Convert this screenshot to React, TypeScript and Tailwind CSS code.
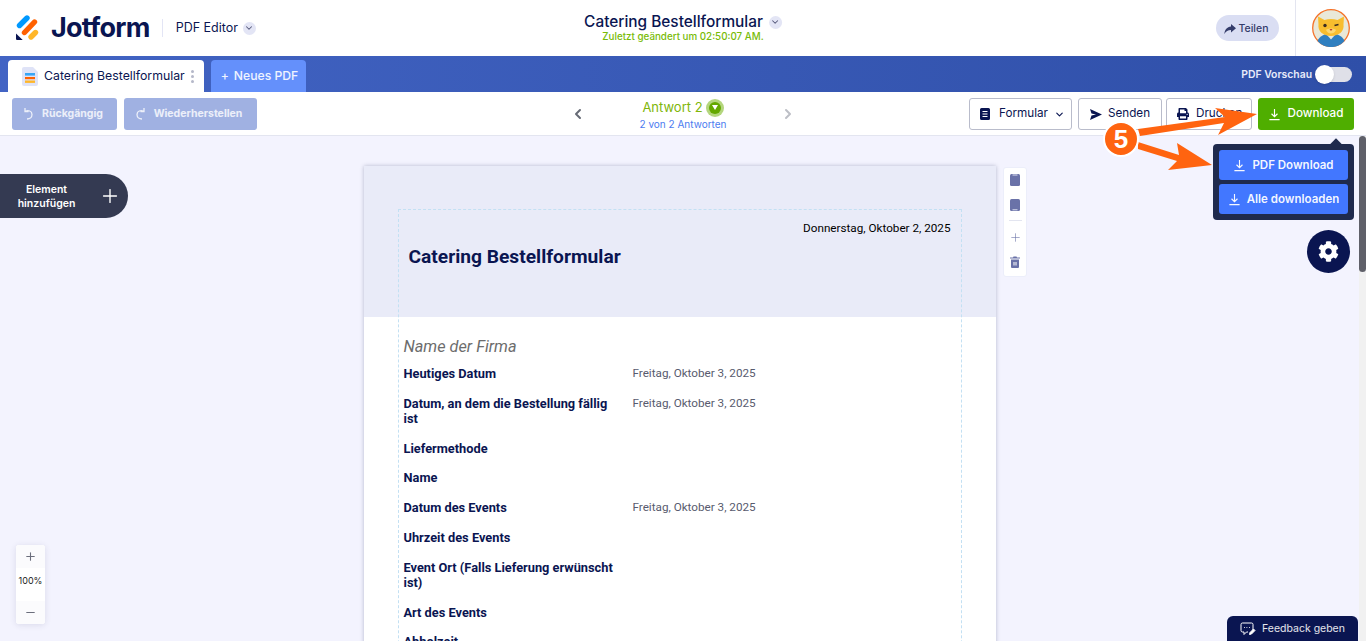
import { ChevronDown, ChevronLeft, ChevronRight, Minus, Plus } from "lucide-react";
import { FaCog, FaPrint } from "react-icons/fa";

const ui = "font-['Inter',sans-serif]";

function DownloadIcon({ className }: { className?: string }) {
  return (
    <svg className={className} viewBox="0 0 14 14" fill="none" stroke="currentColor" strokeWidth={1.2}>
      <path d="M7 1v8M3.800 6.200 7 9.400l3.200-3.200M1.500 12.500h11" />
    </svg>
  );
}

function Logo() {
  return (
    <svg width="24" height="26" viewBox="0 0 24 26" className="shrink-0">
      <path d="M3.500 10.500 11 3" stroke="#0099ff" strokeWidth="5.400" strokeLinecap="round" />
      <path d="M8.500 17.500 18.500 7" stroke="#ff6100" strokeWidth="5.400" strokeLinecap="round" />
      <path d="M15 22 19.500 17.500" stroke="#ffb629" strokeWidth="5.400" strokeLinecap="round" />
      <path d="M0 18.500v5.200c0 .8.600 1.300 1.300 1.300h5.400z" fill="#0a1551" />
    </svg>
  );
}

function Avatar() {
  return (
    <svg width="38" height="38" viewBox="0 0 38 38">
      <circle cx="19" cy="19" r="18.300" fill="#e9e8d8" stroke="#f5732a" strokeWidth="1.300" />
      <path d="M5.500 32c2-5 7-7.500 13.500-7.500S30.500 27 32.500 32a18 18 0 0 1-27 0z" fill="#2f7fc0" />
      <path d="M15 26l4 4.500 4-4.500z" fill="#e9e8d8" />
      <path d="M6 7.500l6.500 3.500c4-1.500 9-1.500 13 0L32 7.500l-.5 8c1 6.500-4.500 11.500-12.500 11.500S5.500 22 6.500 15.500z" fill="#f8bd2e" />
      <path d="M14 21c2-2 8-2 10 0-1 2.500-3 3.500-5 3.500S15 23.500 14 21z" fill="#fbd873" />
      <circle cx="13" cy="16.500" r="1.700" fill="#3a2b20" />
      <path d="M22.500 16.500l4-1" stroke="#3a2b20" strokeWidth="1.500" />
      <path d="M17.500 20h3l-1.500 2z" fill="#c0392b" />
    </svg>
  );
}

function Header() {
  return (
    <header className="relative h-14 shrink-0 bg-white flex items-center">
      <div className="flex items-center pl-4">
        <Logo />
        <span className="ml-[11px] -mt-[2px] text-[27px] font-bold leading-none tracking-[-0.75px] text-[#0a1551]">Jotform</span>
        <span className="ml-[12px] h-[18px] w-px bg-[#e3e5f5]" />
        <span className="ml-[13px] text-[12.500px] text-[#0a1551]">PDF Editor</span>
        <span className="ml-[5px] size-[13px] rounded-full bg-[#e3e5f5] flex items-center justify-center text-[#56597a]">
          <ChevronDown size={10} strokeWidth={2.500} />
        </span>
      </div>
      <div className="absolute left-1/2 top-[13px] -translate-x-1/2 flex flex-col items-center">
        <div className="flex items-center gap-[6px]">
          <span className="text-[15.400px] font-medium leading-[18px] text-[#0a1551]">Catering Bestellformular</span>
          <span className="size-[13px] rounded-full bg-[#e3e5f5] flex items-center justify-center text-[#56597a]">
            <ChevronDown size={10} strokeWidth={2.500} />
          </span>
        </div>
        <span className="text-[9.800px] leading-[11px] font-medium text-[#78bb07]">Zuletzt geändert um 02:50:07 AM.</span>
      </div>
      <div className="ml-auto flex items-center h-full">
        <button className="h-[26px] w-[63px] rounded-full bg-[#dadef3] flex items-center justify-center gap-[3px] pr-[3px] pt-px text-[10.500px] font-medium text-[#343c6a]">
          <svg width="12" height="10" viewBox="0 0 12 10" fill="#343c6a">
            <path d="M7 0l5 4.200L7 8.500V6C4 6 1.800 7.200.3 10 .8 5.800 3 2.800 7 2.500z" />
          </svg>
          Teilen
        </button>
        <div className="ml-4 h-full w-[71px] border-l border-[#e3e5f0] flex items-center justify-center pr-px">
          <Avatar />
        </div>
      </div>
    </header>
  );
}

function TabBar() {
  return (
    <div className="h-9 shrink-0 bg-gradient-to-r from-[#4264c4] to-[#2f4fa8] flex items-end pl-2 pr-[14px]">
      <div className="h-8 w-[196px] rounded-t bg-white flex items-center pl-[14px] relative">
        <svg width="16" height="19" viewBox="0 0 16 19" className="shrink-0">
          <path d="M2 0h9l5 5v12a2 2 0 0 1-2 2H2a2 2 0 0 1-2-2V2a2 2 0 0 1 2-2z" fill="#dfe3f7" />
          <rect x="3" y="6" width="10" height="2.600" fill="#39a6f5" />
          <rect x="3" y="10" width="10" height="2.200" fill="#ff6100" />
          <rect x="3" y="13.500" width="10" height="2.400" fill="#ffb629" />
        </svg>
        <span className="ml-[6px] text-[12.300px] text-[#0a1551] whitespace-nowrap">Catering Bestellformular</span>
        <span className="ml-[6px] flex flex-col gap-[2px]">
          <i className="size-[3px] rounded-full bg-[#b5b8c9]" />
          <i className="size-[3px] rounded-full bg-[#b5b8c9]" />
          <i className="size-[3px] rounded-full bg-[#b5b8c9]" />
        </span>
      </div>
      <div className="ml-[7px] h-8 w-[95px] rounded-t bg-[#6490fb] flex items-center justify-center gap-[5px] pl-[2px] text-[12.200px] font-medium text-white/90 whitespace-nowrap">
        <span>+</span>
        <span>Neues PDF</span>
      </div>
      <div className="ml-auto self-center flex items-center gap-[4px] pt-px">
        <span className="text-[10.400px] font-semibold text-[#e8ebfa]">PDF Vorschau</span>
        <span className="h-[15px] w-9 rounded-full bg-[#dfe0e8] relative">
          <span className="absolute -left-px -top-[2px] size-[19px] rounded-full bg-white shadow" />
        </span>
      </div>
    </div>
  );
}

function Toolbar() {
  return (
    <div className="relative h-11 shrink-0 bg-white border-b border-[#e3e5f0] flex items-center pl-3 pr-3">
      <div className="flex items-center gap-[7px]">
        <button className="h-8 w-[105px] rounded-[3px] bg-[#a0b1e2] flex items-center justify-center gap-[9px] pr-[3px] text-[10.500px] font-bold text-white/80">
          <svg width="10" height="13" viewBox="0 0 10 13" fill="none" stroke="#fff" strokeOpacity=".8" strokeWidth="1.300">
            <path d="M2 1v3.500h3.500M2.500 4.300C5 2.800 9 4 9 7.500 9 10 7 12 4 12" />
          </svg>
          Rückgängig
        </button>
        <button className="h-8 w-[133px] rounded-[3px] bg-[#a0b1e2] flex items-center justify-center gap-[8px] pr-[3px] text-[10.500px] font-bold text-white/80">
          <svg width="10" height="13" viewBox="0 0 10 13" fill="none" stroke="#fff" strokeOpacity=".8" strokeWidth="1.300">
            <path d="M8 1v3.500H4.500M7.500 4.300C5 2.800 1 4 1 7.500 1 10 3 12 6 12" />
          </svg>
          Wiederherstellen
        </button>
      </div>
      <div className="absolute left-[570px] top-0 h-full w-[226px] flex items-center justify-between">
        <ChevronLeft size={16} strokeWidth={3} className="text-[#666a75]" />
        <div className="flex flex-col items-center">
          <div className="flex items-center gap-[3px] h-5">
            <span className="text-[13px] text-[#80b60a]">Antwort 2</span>
            <span className="size-[18px] rounded-full bg-[#b4d67e] flex items-center justify-center">
              <span className="size-[12px] rounded-full bg-[#64a800] flex items-center justify-center">
                <svg width="6" height="5" viewBox="0 0 6 5" fill="#fff"><path d="M0 0h6L3 5z" /></svg>
              </span>
            </span>
          </div>
          <span className="text-[10px] leading-3 text-[#4c7cf0]">2 von 2 Antworten</span>
        </div>
        <ChevronRight size={16} strokeWidth={3} className="text-[#bdbfc6]" />
      </div>
      <div className="ml-auto flex items-center text-[11.700px] text-[#0a1551]">
        <button className="h-8 w-[103px] rounded-[3px] border border-[#b9bccb] flex items-center pl-[10px] pt-px">
          <svg width="10" height="12" viewBox="0 0 10 12" fill="#0a1551">
            <path d="M1.500 0h7A1.500 1.500 0 0 1 10 1.500v9A1.500 1.500 0 0 1 8.500 12h-7A1.500 1.500 0 0 1 0 10.500v-9A1.500 1.500 0 0 1 1.500 0zM2.500 3v1h5V3zm0 2.500v1h5v-1zm0 2.500v1h5V8z" fillRule="evenodd" />
          </svg>
          <span className="ml-[9px]">Formular</span>
          <ChevronDown size={11} strokeWidth={2.500} className="ml-[6px]" />
        </button>
        <button className="ml-[6px] h-8 w-[84px] rounded-[3px] border border-[#b9bccb] flex items-center pl-[11px] pt-px">
          <svg width="12" height="11" viewBox="0 0 12 11" fill="#0a1551"><path d="M0 0l12 5.500L0 11l1.500-4.500 4.500-1-4.500-1z" /></svg>
          <span className="ml-[6px]">Senden</span>
        </button>
        <button className="ml-[4px] h-8 w-[86px] rounded-[3px] border border-[#b9bccb] flex items-center pl-[10px] pt-px">
          <FaPrint size={12} />
          <span className="ml-[7px]">Drucken</span>
        </button>
        <button className="ml-[6px] h-8 w-24 rounded-[3px] bg-[#4fae00] flex items-center justify-center gap-[6px] pt-px font-medium text-white">
          <DownloadIcon className="size-[13px]" />
          Download
        </button>
      </div>
    </div>
  );
}

const rows: [string, string?][] = [
  ["Heutiges Datum", "Freitag, Oktober 3, 2025"],
  ["Datum, an dem die Bestellung fällig ist", "Freitag, Oktober 3, 2025"],
  ["Liefermethode"],
  ["Name"],
  ["Datum des Events", "Freitag, Oktober 3, 2025"],
  ["Uhrzeit des Events"],
  ["Event Ort (Falls Lieferung erwünscht ist)"],
  ["Art des Events"],
  ["Abholzeit"],
];

function PdfPage() {
  return (
    <div className="relative w-[632px] h-[700px] shrink-0 bg-white shadow-[0_0_4px_rgba(40,45,90,0.3)] font-['Roboto',sans-serif]">
      <div className="h-[151px] bg-[#e9ebf8] relative">
        <p className="absolute right-[45px] top-[55px] text-[11.700px] leading-[14px] text-black">Donnerstag, Oktober 2, 2025</p>
        <h1 className="absolute left-[45px] top-[80px] text-[19.200px] leading-[22px] font-bold text-[#0a1551]">Catering Bestellformular</h1>
      </div>
      <div className="absolute left-[34px] top-[43px] w-[564px] h-[660px] border border-dashed border-[#c3e0f3]" />
      <div className="pl-10 pt-[20px]">
        <p className="text-[16.300px] leading-5 italic text-[#6c6c6c] mb-[9px]">Name der Firma</p>
        {rows.map(([label, value]) => (
          <div key={label} className="flex mb-[14.800px]">
            <p className="w-[229px] shrink-0 pr-[13px] text-[12.800px] leading-[15px] font-bold text-[#0a1551]">{label}</p>
            {value && <p className="text-[11.700px] leading-[14px] text-[#585b6e]">{value}</p>}
          </div>
        ))}
      </div>
    </div>
  );
}

function SideTools() {
  return (
    <div className="absolute left-[1003px] top-[31px] w-[24px] h-[110px] rounded-[3px] bg-white border border-[#eceefa] flex flex-col items-center text-[#6a72a8] pt-[6px]">
      <svg width="10" height="12" viewBox="0 0 10 12" fill="#6a72a8"><rect width="10" height="12" rx="1.500" /><path d="M2.500 1h5" stroke="#dfe2f2" /></svg>
      <svg width="10" height="12" viewBox="0 0 10 12" fill="#6a72a8" className="mt-[13px]"><rect width="10" height="12" rx="1.500" /><path d="M2.500 10.800h5" stroke="#dfe2f2" /></svg>
      <span className="mt-[9px] w-[13px] h-px bg-[#e3e5f0]" />
      <Plus size={13} strokeWidth={1.100} className="mt-[10px]" />
      <svg width="10" height="12" viewBox="0 0 10 12" fill="#6a72a8" className="mt-[12px]">
        <path d="M0 1.500h3L3.500.5h3L7 1.500h3v1H0zM1 3.500h8V11a1 1 0 0 1-1 1H2a1 1 0 0 1-1-1z" />
        <path d="M4 6v3.500M6 6v3.500" stroke="#fff" />
      </svg>
    </div>
  );
}

function Callouts() {
  return (
    <>
      <svg className="absolute left-0 top-0 pointer-events-none" width="1366" height="200">
        <polygon points="1138,129 1225,117 1215,108 1257,114 1218,135 1224,123 1140,136" fill="#ff6410" />
        <polygon points="1138,142 1179,155 1177,143 1212,165 1168,170 1177,161 1138,149" fill="#ff6410" />
      </svg>
      <div className="absolute left-[1103px] top-[121px] size-[36px] rounded-full bg-[#ff6410] border-2 border-white flex items-center justify-center text-[26px] font-bold leading-none text-white font-['Liberation_Sans',sans-serif]">
        5
      </div>
      <div className="absolute left-[1213px] top-[144px] w-[141px] h-[76px] rounded bg-[#1f2a4d] p-[6px] flex flex-col gap-1 text-[11.500px] font-semibold text-white/95">
        <span className="absolute left-[119px] -top-[4px] size-[8px] rotate-45 bg-[#1f2a4d]" />
        <button className="h-[30px] rounded-[3px] bg-[#4277ff] flex items-center justify-center gap-[6px] pt-px">
          <DownloadIcon className="size-[13px]" />
          PDF Download
        </button>
        <button className="h-[30px] rounded-[3px] bg-[#4277ff] flex items-center justify-center gap-[6px] pt-px">
          <DownloadIcon className="size-[13px]" />
          Alle downloaden
        </button>
      </div>
    </>
  );
}

export default function App() {
  return (
    <div className={`relative h-[641px] w-[1366px] overflow-hidden flex flex-col ${ui}`}>
      <Header />
      <TabBar />
      <Toolbar />
      <main className="relative flex-1 min-h-0 bg-[#f3f3fe] pr-[7px] flex justify-center pt-[30px] overflow-hidden">
        <PdfPage />
        <SideTools />
        <div className="absolute left-0 top-[38px] h-[44px] w-[128px] rounded-r-[22px] bg-[#343a52] flex items-center text-white">
          <span className="w-[93px] pt-[2px] text-center text-[10.500px] leading-[14px] font-semibold">Element hinzufügen</span>
          <Plus size={22} strokeWidth={1.500} className="ml-[6px]" />
        </div>
        <div className="absolute left-[16px] top-[409px] w-[29px] h-[79px] rounded-[3px] bg-white shadow-[0_1px_6px_rgba(40,45,90,0.12)] flex flex-col items-center text-[#6b6e7c]">
          <div className="h-[23px] w-full rounded-t-[3px] bg-[#fbfbfd] flex items-center justify-center"><Plus size={13} strokeWidth={2} /></div>
          <div className="flex-1 w-full flex items-start justify-center pt-[7px] text-[9px] leading-3 text-[#222]">100%</div>
          <div className="h-[23px] w-full rounded-b-[3px] bg-[#fbfbfd] flex items-center justify-center"><Minus size={13} strokeWidth={2} /></div>
        </div>
        <div className="absolute left-[1307px] top-[94px] size-[43px] rounded-full bg-[#0a1551] flex items-center justify-center text-white">
          <FaCog size={21} />
        </div>
        <div className="absolute right-[8px] bottom-0 h-[25px] w-[131px] rounded-t-[6px] bg-[#0a1551] flex items-center justify-center gap-[6px] pt-px text-[10.500px] text-white/90">
          <svg width="16" height="14" viewBox="0 0 16 14" fill="none" stroke="#fff" strokeWidth="1">
            <path d="M13 8V2.500A1.500 1.500 0 0 0 11.500 1h-9A1.500 1.500 0 0 0 1 2.500v6A1.500 1.500 0 0 0 2.500 10H4v2.500L6.500 10H8" />
            <path d="M4 5.500h.8M6.500 5.500h.8M9 5.500h.8" />
            <path d="M9.500 12.500l.5-2 3.500-3.500 1.500 1.500-3.500 3.500z" fill="#fff" />
          </svg>
          Feedback geben
        </div>
        <div className="absolute right-0 top-0 h-full w-[7px] bg-[#f1f1f1]">
          <div className="h-[136px] w-full rounded-sm bg-[#5f6069]" />
        </div>
      </main>
      <Callouts />
    </div>
  );
}
